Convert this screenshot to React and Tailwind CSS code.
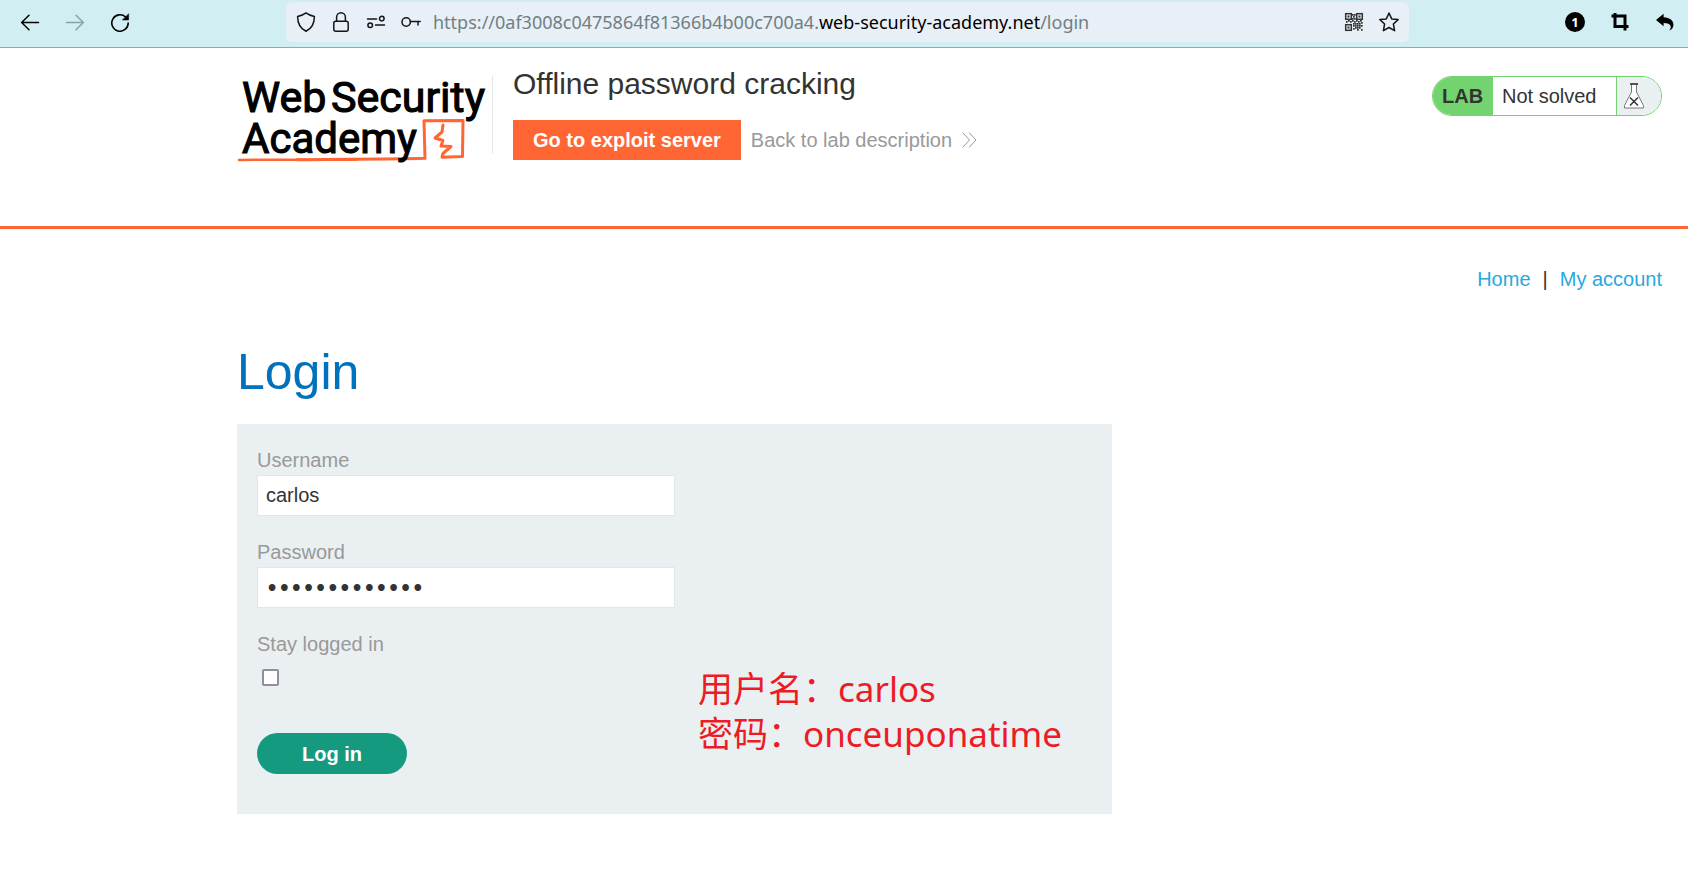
import React from "react";

const iconProps = {
  fill: "none",
  stroke: "currentColor",
  strokeLinecap: "round",
  strokeLinejoin: "round",
};

function IconButton({ label, className = "", children }) {
  return (
    <button type="button" aria-label={label} className={`flex h-5 w-5 items-center justify-center ${className}`}>
      {children}
    </button>
  );
}

function BackIcon() {
  return (
    <svg width="20" height="20" viewBox="0 0 20 20" strokeWidth="1.5" {...iconProps}>
      <path d="M18.5 10.5H1.8M9 3.3L1.6 10.5L9 17.7" />
    </svg>
  );
}

function ForwardIcon() {
  return (
    <svg width="20" height="20" viewBox="0 0 20 20" strokeWidth="1.5" {...iconProps}>
      <path d="M1.5 10.5H18.2M11 3.3L18.4 10.5L11 17.7" />
    </svg>
  );
}

function ReloadIcon() {
  return (
    <svg width="20" height="20" viewBox="0 0 20 20" strokeWidth="1.6" {...iconProps}>
      <path d="M18.2 11A8.2 8.2 0 1 1 15.6 5" />
      <path d="M18.6 2V8H12.6Z" fill="currentColor" strokeWidth="0.5" />
    </svg>
  );
}

function ShieldIcon() {
  return (
    <svg width="20" height="20" viewBox="0 0 20 20" strokeWidth="1.5" {...iconProps}>
      <path d="M10 .9C7.7 2.7 4.8 3.8 1.6 4.4C1.6 11.2 4.2 16.4 10 19.2C15.8 16.4 18.4 11.2 18.4 4.4C15.2 3.8 12.3 2.7 10 .9Z" />
    </svg>
  );
}

function LockIcon() {
  return (
    <svg width="20" height="20" viewBox="0 0 20 20" strokeWidth="1.5" {...iconProps}>
      <rect x="2.8" y="9.3" width="14.4" height="9.9" rx="2" />
      <path d="M5.6 9.3V5.2A4.4 4.4 0 0 1 14.4 5.2V9.3" />
    </svg>
  );
}

function PermissionsIcon() {
  return (
    <svg width="20" height="20" viewBox="0 0 20 20" strokeWidth="1.5" {...iconProps}>
      <path d="M1.5 7H10.5M9.5 13H18.5" />
      <circle cx="15.8" cy="6.6" r="2.3" />
      <circle cx="4.2" cy="13.2" r="2.3" />
    </svg>
  );
}

function KeyIcon() {
  return (
    <svg width="20" height="20" viewBox="0 0 20 20" strokeWidth="1.5" {...iconProps}>
      <circle cx="5.2" cy="10" r="4.2" />
      <path d="M9.4 9.6H19.2M17 9.6V13" />
    </svg>
  );
}

const qrDots = [
  [8, 2], [10, 2], [9, 4], [8, 6], [10, 6],
  [2, 9], [4, 8], [6, 9], [8, 8], [10, 9], [12, 8], [14, 9], [16, 8],
  [11, 11], [13, 13], [15, 11], [17, 13], [11, 15], [13, 17], [15, 15], [17, 17],
  [9, 11], [9, 13], [9, 16], [13, 11], [17, 10], [11, 13], [15, 13], [13, 15],
];

function QrIcon() {
  return (
    <svg width="20" height="20" viewBox="0 0 20 20" className="text-[#333]">
      <g fill="none" stroke="currentColor" strokeWidth="1.5">
        <rect x="1.700" y="1.700" width="5.600" height="5.600" />
        <rect x="12.700" y="1.700" width="5.600" height="5.600" />
        <rect x="1.700" y="12.700" width="5.600" height="5.600" />
      </g>
      <g fill="currentColor">
        <rect x="3.500" y="3.500" width="2" height="2" />
        <rect x="14.500" y="3.500" width="2" height="2" />
        <rect x="3.500" y="14.500" width="2" height="2" />
        {qrDots.map(([x, y]) => (
          <rect key={`${x}-${y}`} x={x} y={y} width="1.7" height="1.7" />
        ))}
      </g>
    </svg>
  );
}

function StarIcon() {
  return (
    <svg width="20" height="20" viewBox="0 0 20 20" strokeWidth="1.5" {...iconProps}>
      <path d="M10 1L12.7 6.9L19.1 7.6L14.4 12L15.6 18.7L10 15.5L4.4 18.7L5.6 12L.9 7.6L7.3 6.9Z" />
    </svg>
  );
}

function CropIcon() {
  return (
    <svg width="20" height="20" viewBox="0 0 20 20" fill="none" stroke="currentColor" strokeWidth="3">
      <path d="M1.5 4H15V18.5M5 1V14.5H18.5" />
    </svg>
  );
}

function UndoIcon() {
  return (
    <svg width="20" height="20" viewBox="0 0 20 20" fill="currentColor">
      <path d="M8.6 1.8V5.2C15 5.4 18.6 8.6 18.4 13.2C18.3 15.6 16.8 17.7 14.2 18.4C15.6 16.8 16 15.6 15.6 14C15 11.8 12.6 10.9 8.6 10.9V14.2L1 8Z" />
    </svg>
  );
}

function Logo() {
  return (
    <svg width="255" height="97" viewBox="0 -1 255 97" role="img" aria-label="Web Security Academy">
      <g fill="none" stroke="#ff6633" strokeLinecap="round" strokeLinejoin="round" strokeWidth="3">
        <path d="M60 92.800C100 92 145 92.500 188 91.300L187 53.800L226 53.500L225.500 89.500L205 90.200L206 86.500L214 79.500L204 79L206 73.500L198 71L205 65L206 58" />
        <path d="M2 93C40 92 80 93.500 120 92.500" strokeWidth="2.500" />
      </g>
      <g fill="#000" stroke="#000" strokeWidth="1.1" fontFamily="Roboto, sans-serif">
        <text x="5" y="45" fontSize="43">Web</text>
        <text x="94" y="45" fontSize="43">Security</text>
        <text x="5" y="86" fontSize="42">Academy</text>
      </g>
    </svg>
  );
}

function FlaskIcon() {
  return (
    <svg width="22" height="26" viewBox="0 0 22 26" fill="none">
      <path d="M7.5 1H14.500M8.5 1V9L1.500 22.500V25H20.500V22.500L13.500 9V1" fill="#fff" stroke="#777" strokeWidth="1" />
      <path d="M7 1H15" stroke="#333" strokeWidth="1.500" />
      <path d="M7 14.500L15 22.500M15 14.500L7 22.500" stroke="#333" strokeWidth="1.500" />
    </svg>
  );
}

function BrowserBar() {
  return (
    <div className="flex h-12 items-start border-b border-[#93a9b1] bg-[#d1eff3] pl-5 pr-[13px] text-black">
      <nav aria-label="Browser" className="flex h-11 w-[266px] shrink-0 items-center gap-[25px]">
        <IconButton label="Back"><BackIcon /></IconButton>
        <IconButton label="Forward" className="text-[#8aa1a5]"><ForwardIcon /></IconButton>
        <IconButton label="Reload"><ReloadIcon /></IconButton>
      </nav>
      <div className="mt-0.5 flex h-10 min-w-0 flex-1 items-center gap-3 rounded-md bg-[#e8eff6] px-2.5 text-[#15141a]">
        <div className="flex gap-[15px]">
          <IconButton label="Tracking protection"><ShieldIcon /></IconButton>
          <IconButton label="Connection secure"><LockIcon /></IconButton>
          <IconButton label="Permissions"><PermissionsIcon /></IconButton>
          <IconButton label="Saved logins"><KeyIcon /></IconButton>
        </div>
        <div className="min-w-0 flex-1 truncate font-['Noto_Sans','Noto_Sans_CJK_SC',sans-serif] text-[18px] leading-6 text-[#6f8084]">
          https://0af3008c0475864f81366b4b00c700a4.<span className="text-black">web-security-academy.net</span>/login
        </div>
        <div className="flex gap-[15px]">
          <IconButton label="QR code"><QrIcon /></IconButton>
          <IconButton label="Bookmark"><StarIcon /></IconButton>
        </div>
      </div>
      <div className="flex h-11 w-[266px] shrink-0 items-center justify-end gap-[25px]">
        <button type="button" className="flex h-5 w-5 items-center justify-center rounded-full bg-black font-['Noto_Sans',sans-serif] text-[13px] font-bold leading-5 text-white">
          1
        </button>
        <IconButton label="Crop"><CropIcon /></IconButton>
        <IconButton label="Undo"><UndoIcon /></IconButton>
      </div>
    </div>
  );
}

function LabStatus() {
  return (
    <div className="flex h-10 w-[230px] overflow-hidden rounded-full border border-[#72d36f] leading-[38px]">
      <strong className="w-[60px] bg-[#72d36f] pl-[9px]">LAB</strong>
      <span className="flex-1 pl-[9px]">Not solved</span>
      <span className="flex w-[45px] items-center border-l border-[#72d36f] bg-[#eaeff2] pl-1.5">
        <FlaskIcon />
      </span>
    </div>
  );
}

function LabHeader() {
  return (
    <header className="flex h-[181px] items-start border-b-[3px] border-[#ff6633] pl-[237px] pr-[26px] pt-[18px]">
      <Logo />
      <div className="mt-2.5 h-[78px] w-px shrink-0 bg-[#e4e6e8]" />
      <div className="flex-1 pl-5">
        <h2 className="text-[30px] leading-9">Offline password cracking</h2>
        <div className="mt-[18px] flex items-center gap-2.5">
          <a href="#exploit" className="bg-[#ff6633] px-5 font-bold leading-10 text-white">Go to exploit server</a>
          <a href="#lab" className="flex items-center gap-2.5 text-[#999]">
            Back to lab description
            <svg width="15" height="16" viewBox="0 0 15 16" fill="none" stroke="#999" strokeWidth="1">
              <path d="M.5 .5L7.500 8L.5 15.500M7 .5L14 8L7 15.500" />
            </svg>
          </a>
        </div>
      </div>
      <div className="mt-2.5"><LabStatus /></div>
    </header>
  );
}

const inputClass = "mt-[3px] h-[41px] w-[418px] border border-[#e3e6e7] bg-white px-2 outline-none";

function LoginForm() {
  return (
    <form onSubmit={(e) => e.preventDefault()} className="relative w-full max-w-[875px] bg-[#eaeff2] px-5 pb-10 pt-6">
      <div className="flex flex-col items-start gap-6">
        <div className="flex flex-col">
          <label htmlFor="username" className="text-[#999]">Username</label>
          <input id="username" type="text" defaultValue="carlos" className={inputClass} />
        </div>
        <div className="flex flex-col">
          <label htmlFor="password" className="text-[#999]">Password</label>
          <input id="password" type="password" defaultValue="onceuponatime" className={`${inputClass} font-['DejaVu_Sans',sans-serif] text-[19px] font-bold`} />
        </div>
        <div className="flex flex-col">
          <label htmlFor="stay" className="text-[#999]">Stay logged in</label>
          <input id="stay" type="checkbox" className="ml-[5px] mt-[13px] h-[17px] w-[17px] appearance-none rounded-[2px] border-2 border-[#8f8f9d] bg-white" />
        </div>
      </div>
      <button type="submit" className="mt-[47px] h-[41px] w-[150px] rounded-full bg-[#159a80] font-bold text-white">
        Log in
      </button>
      <p className="absolute left-[461px] top-[242px] whitespace-nowrap font-['Noto_Sans','Noto_Sans_CJK_SC',sans-serif] text-[35px] leading-[45px] text-[#ed1c24]" lang="zh-CN">
        用户名：carlos
        <br />
        密码：onceuponatime
      </p>
    </form>
  );
}

export default function App() {
  return (
    <div className="min-h-screen bg-white font-['Liberation_Sans',Arial,sans-serif] text-[20px] leading-6 text-[#333]">
      <BrowserBar />
      <LabHeader />
      <main className="pl-[237px] pr-[26px] pt-[38px]">
        <nav className="flex justify-end gap-3 text-[#29a8e0]">
          <a href="#home">Home</a>
          <span className="text-[#333]">|</span>
          <a href="#account">My account</a>
        </nav>
        <h1 className="mt-12 text-[50px] leading-[66px] text-[#0071bc]">Login</h1>
        <div className="mt-[19px]"><LoginForm /></div>
      </main>
    </div>
  );
}
